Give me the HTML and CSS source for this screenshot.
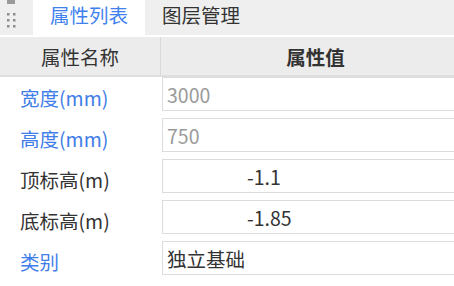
FILE: index.html
```html
<!DOCTYPE html>
<html lang="zh-CN">

<head>
    <meta charset="UTF-8">
    <meta name="viewport" content="width=device-width, initial-scale=1.0">
    <title>属性列表</title>
    <link rel="stylesheet" href="styles.css">
</head>

<body>
    <div class="panel">
        <div class="tabs">
            <div class="grip">
                <svg width="33" height="35" viewBox="0 0 33 35">
                    <rect x="7" y="0" width="8" height="4" fill="#9a9a9a" />
                    <rect x="7" y="13" width="2.5" height="2.5" fill="#8c8c8c" />
                    <rect x="13" y="13" width="2.5" height="2.5" fill="#8c8c8c" />
                    <rect x="7" y="19" width="2.5" height="2.5" fill="#8c8c8c" />
                    <rect x="13" y="19" width="2.5" height="2.5" fill="#8c8c8c" />
                    <rect x="7" y="25" width="2.5" height="2.5" fill="#8c8c8c" />
                    <rect x="13" y="25" width="2.5" height="2.5" fill="#8c8c8c" />
                </svg>
            </div>
            <div class="tab active">属性列表</div>
            <div class="tab">图层管理</div>
        </div>

        <div class="table">
            <div class="head">
                <div class="head-name">属性名称</div>
                <div class="head-value">属性值</div>
            </div>
            <div class="row">
                <label class="key link">宽度(mm)</label>
                <input class="val" type="text" value="3000" disabled>
            </div>
            <div class="row">
                <label class="key link">高度(mm)</label>
                <input class="val" type="text" value="750" disabled>
            </div>
            <div class="row">
                <label class="key">顶标高(m)</label>
                <input class="val indent" type="text" value="-1.1">
            </div>
            <div class="row">
                <label class="key">底标高(m)</label>
                <input class="val indent" type="text" value="-1.85">
            </div>
            <div class="row">
                <label class="key link">类别</label>
                <input class="val" type="text" value="独立基础">
            </div>
        </div>
    </div>
</body>

</html>
```

FILE: styles.css
```css
html,
body {
    margin: 0;
    overflow: hidden;
}

body {
    font-family: "Noto Sans CJK SC", "Noto Sans", sans-serif;
    background-color: #ffffff;
    color: #333333;
}

.panel {
    width: 470px;
}

.tabs {
    display: flex;
    height: 35px;
    background-color: #efeff0;
    border-bottom: 2px solid #ffffff;
}

.grip {
    width: 33px;
}

.tab {
    padding: 0 17px;
    font-size: 19.5px;
    line-height: normal;
    color: #333333;
}

.tab.active {
    background-color: #ffffff;
    color: #3f82ee;
}

.head {
    display: grid;
    grid-template-columns: 161px 1fr;
    height: 38px;
    background-color: #ececec;
    border-bottom: 2px solid #dedede;
    font-size: 19.5px;
}

.head-name,
.head-value {
    display: flex;
    align-items: center;
    justify-content: center;
}

.head-name {
    border-right: 1px solid #dadada;
}

.head-value {
    font-weight: bold;
}

.table {
    display: flex;
    flex-direction: column;
}

.row {
    display: grid;
    grid-template-columns: 162px 1fr;
    align-items: center;
    height: 41px;
}

.row:first-of-type {
    margin-top: 3px;
}

.key {
    padding-left: 20px;
    font-size: 19.5px;
    color: #333333;
}

.key.link {
    color: #3f7ee8;
}

.val {
    box-sizing: border-box;
    height: 34px;
    margin: 0 0 7px 0;
    padding: 0 4px;
    border: 1px solid #dcdcdc;
    font-family: inherit;
    font-size: 19.5px;
    color: #333333;
    background-color: #ffffff;
    outline: none;
}

.val:disabled {
    color: #9a9a9a;
}

.val.indent {
    text-indent: 80px;
}
```
